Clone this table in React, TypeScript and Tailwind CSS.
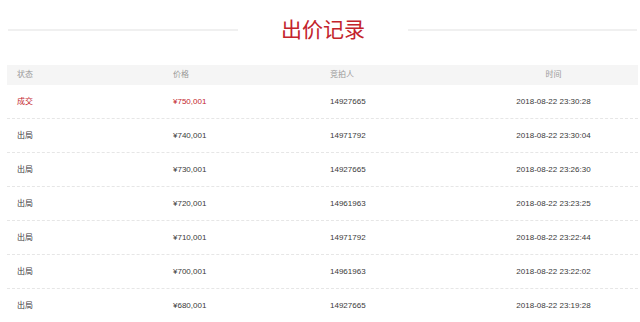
import React from 'react';

const rows = [
  { status: '成交', price: '¥750,001', bidder: '14927665', time: '2018-08-22 23:30:28', deal: true },
  { status: '出局', price: '¥740,001', bidder: '14971792', time: '2018-08-22 23:30:04' },
  { status: '出局', price: '¥730,001', bidder: '14927665', time: '2018-08-22 23:26:30' },
  { status: '出局', price: '¥720,001', bidder: '14961963', time: '2018-08-22 23:23:25' },
  { status: '出局', price: '¥710,001', bidder: '14971792', time: '2018-08-22 23:22:44' },
  { status: '出局', price: '¥700,001', bidder: '14961963', time: '2018-08-22 23:22:02' },
  { status: '出局', price: '¥680,001', bidder: '14927665', time: '2018-08-22 23:19:28' },
];

export default function App() {
  return (
    <div
      className="w-[640px] h-[322px] bg-white overflow-hidden"
      style={{ fontFamily: '"Liberation Sans", "Noto Sans CJK SC", sans-serif' }}
    >
      <div className="flex items-center h-[59px] pl-[8px]">
        <div className="h-[2px] w-[230px] bg-[#f0f0f0]" />
        <h2 className="w-[170px] text-center text-[21px] leading-[26px] text-[#c3242c]">出价记录</h2>
        <div className="h-[2px] w-[229px] bg-[#f0f0f0]" />
      </div>

      <div className="mx-[7px] mt-[6px] w-[631px]">
        <div className="grid grid-cols-[156px_157px_157px_1fr] h-[20px] items-center bg-[#f5f5f5] text-[8px] text-[#9a9a9a]">
          <div className="pl-[10px]">状态</div>
          <div className="pl-[10px]">价格</div>
          <div className="pl-[10px]">竞拍人</div>
          <div className="text-center pr-[8px]">时间</div>
        </div>
        {rows.map((r, i) => (
          <div
            key={i}
            className="grid grid-cols-[156px_157px_157px_1fr] h-[34px] items-center border-b border-dashed border-[#e6e6e6] text-[8px] text-[#3a3a3a]"
          >
            <div className={`pl-[10px] ${r.deal ? 'text-[#c3242c]' : ''}`}>{r.status}</div>
            <div className={`pl-[10px] ${r.deal ? 'text-[#c3242c]' : ''}`}>{r.price}</div>
            <div className="pl-[10px]">{r.bidder}</div>
            <div className="text-center pr-[8px]">{r.time}</div>
          </div>
        ))}
      </div>
    </div>
  );
}
